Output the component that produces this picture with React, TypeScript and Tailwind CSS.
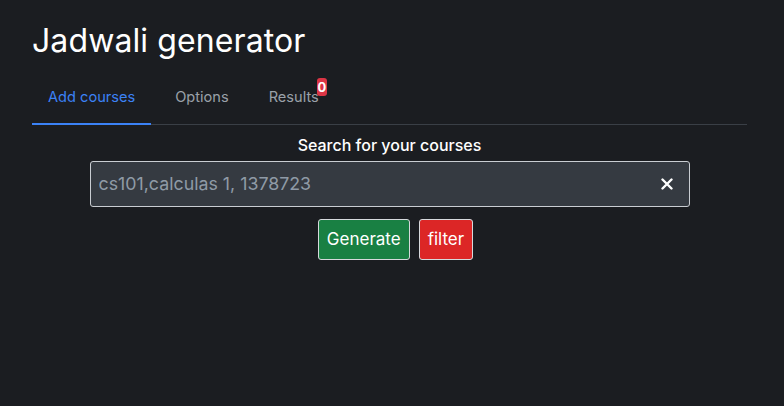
import React, { useState } from 'react';

const tabs = ['Add courses', 'Options', 'Results'];

export default function App() {
  const [active, setActive] = useState(0);
  const [query, setQuery] = useState('cs101,calculas 1, 1378723');
  return <div className="min-h-[406px] w-full bg-[#1b1d21] font-['Inter',sans-serif] text-white">
      <div className="w-[715px] ml-8 pt-[21px]">
        <h1 className="text-[32px] leading-[40px] font-normal tracking-[0.1px]">Jadwali generator</h1>
        <div className="mt-[20px] flex gap-2 border-b border-[#3a3f46]">
          {tabs.map((t, i) => <div key={t} onClick={() => setActive(i)} className={`relative cursor-pointer px-4 pt-[6px] pb-[16px] text-[14.6px] leading-[20px] ${i === active ? 'text-[#3b82f6] border-b-2 border-[#3b82f6] -mb-px' : 'text-[#9aa1a9]'}`}>
              {t}
              {t === 'Results' && <div className="absolute right-[8px] top-[-3px] flex h-[18px] w-[10px] items-center justify-center rounded-[3px] bg-[#dc3545] text-[13px] font-bold text-white">0</div>}
            </div>)}
        </div>
        <div className="flex flex-col items-center">
          <p className="mt-[10px] text-[16px] leading-[20px] font-medium">Search for your courses</p>
          <div className="mt-[6px] flex h-[46px] w-[600px] items-center rounded-[3px] border border-[#c9cdd2] bg-[#353a41] pl-2 pr-[16px]">
            <input value={query} onChange={e => setQuery(e.target.value)} className="flex-1 bg-transparent text-[17.8px] text-[#8f9aa6] outline-none" />
            <button onClick={() => setQuery('')} className="text-white">
              <svg width="12" height="12" viewBox="0 0 12 12"><path d="M1.5 1.5 10.5 10.5M10.5 1.5 1.5 10.5" stroke="currentColor" strokeWidth="2.4" strokeLinecap="round" /></svg>
            </button>
          </div>
          <div className="mt-3 ml-[12px] flex gap-[9px]">
            <button className="h-[41px] rounded-[3px] border border-[#d6d9dc] bg-[#198043] px-2 text-[17px] text-white">Generate</button>
            <button className="h-[41px] rounded-[3px] border border-[#d6d9dc] bg-[#dc2626] px-2 text-[17px] text-white">filter</button>
          </div>
        </div>
      </div>
    </div>;
}
